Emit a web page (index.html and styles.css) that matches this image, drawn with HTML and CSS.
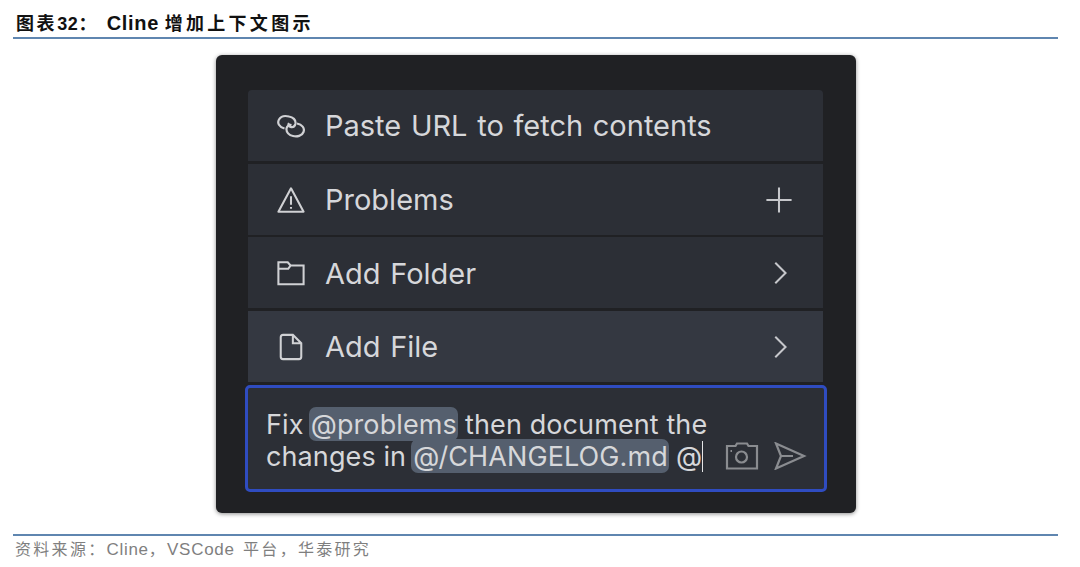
FILE: index.html
```html
<!DOCTYPE html>
<html lang="zh-CN">
<head>
<meta charset="UTF-8">
<title>图表32</title>
<link rel="stylesheet" href="styles.css">
</head>
<body>

<div class="fig-head">
    <h1 class="fig-title"><span class="cjk-narrow">图表</span>32： <span class="latin">Cline</span> <span class="cjk">增加上下文图示</span></h1>
</div>

<div class="fig-body">
    <div class="panel">
        <ul class="menu">
            <li class="menu-item">
                <svg class="icon" viewBox="0 0 28 28"><path d="M7.500 16.500C2 15 0 11 2 7.500C4 4 8 3.500 12 4.500C16 5 19 8 18.500 11.500C18 14 16 15.500 13.500 15C11.500 14.500 11 12.500 12 11"/><path d="M20 11.500C25 12.500 28 16 26.500 20C25 24 20 25 16 24C12 23.500 9 20 9.500 16.500C10 14 12 12.500 14.500 13"/></svg>
                <span class="menu-label">Paste URL to fetch contents</span>
            </li>
            <li class="menu-item">
                <svg class="icon" viewBox="0 0 30 30"><path d="M15 2.500 28.500 27.500H1.500Z" stroke-linejoin="round"/><path d="M15 11v9M15 22.500v2"/></svg>
                <span class="menu-label">Problems</span>
                <svg class="action" viewBox="0 0 30 30"><path d="M15 1.500v27M1.500 15h27"/></svg>
            </li>
            <li class="menu-item">
                <svg class="icon" viewBox="0 0 30 30"><path d="M1.500 27V3.500h10l3 3.500h14v20ZM1.500 10.500h10.500l2.500-3.500"/></svg>
                <span class="menu-label">Add Folder</span>
                <svg class="action" viewBox="0 0 30 30"><path d="M11 4l11 11-11 11"/></svg>
            </li>
            <li class="menu-item menu-item-active">
                <svg class="icon" viewBox="0 0 30 30"><path d="M17 2H6.500Q4 2 4 4.500v21Q4 28 6.500 28h17Q26 28 26 25.500V11ZM17 2v9h9"/></svg>
                <span class="menu-label">Add File</span>
                <svg class="action" viewBox="0 0 30 30"><path d="M11 4l11 11-11 11"/></svg>
            </li>
        </ul>
        <div class="composer">
            <p class="composer-text">Fix <span class="chip">@problems</span> then document the<br>changes in <span class="chip">@/CHANGELOG.md</span> @<span class="caret"></span></p>
            <div class="composer-tools">
                <svg class="tool" viewBox="0 0 34 28"><path d="M2 4h8.500l1.500-2.500h10L23.500 4H32v22.500H2Z"/><circle cx="16.500" cy="15" r="5.500"/><path d="M5.500 9H7"/></svg>
                <svg class="tool" viewBox="0 0 34 28"><path d="M3 1.500 31 14 3 26.500 8 14ZM8 14H20"/></svg>
            </div>
        </div>
    </div>
</div>

<div class="fig-foot">
    <p class="fig-source"><span class="src-cjk">资料来源：</span><span class="src-latin">Cline</span><span class="src-cjk">，</span><span class="src-latin">VSCode</span> <span class="src-cjk src-gap">平台，华泰研究</span></p>
</div>

</body>
</html>
```

FILE: styles.css
```css
body {
    margin: 0;
    padding: 0 22px 0 13px;
    background-color: #fff;
    font-family: "Liberation Sans", "Noto Sans CJK SC", sans-serif;
}

.fig-head {
    height: 37px;
    border-bottom: 2px solid #5f86b0;
}

.fig-title {
    margin: 0;
    padding: 12px 0 0 3px;
    font-size: 18px;
    line-height: 23px;
    font-weight: 700;
    letter-spacing: 0.6px;
    color: #111;
}

.cjk-narrow {
    letter-spacing: 2.6px;
}

.cjk {
    letter-spacing: 3.3px;
}

.latin {
    font-size: 20px;
    letter-spacing: 0.7px;
    margin-left: 4px;
}

.fig-body {
    display: flex;
    justify-content: center;
    padding: 16px 0 21px 1px;
}

.panel {
    width: 640px;
    height: 458px;
    box-sizing: border-box;
    padding: 35px 33px 0 32px;
    background-color: #202124;
    border-radius: 6px;
    box-shadow: 0 1px 4px rgba(0, 0, 0, 0.45);
}

.menu {
    list-style-type: none;
    margin: 0;
    padding: 0;
    display: flex;
    flex-direction: column;
    gap: 2.5px;
}

.menu-item {
    height: 71px;
    box-sizing: border-box;
    display: flex;
    align-items: center;
    padding: 1px 30px 0 29px;
    background-color: #2c2f36;
    color: #d6d7da;
}

.menu-item:first-child {
    padding-top: 0;
    border-radius: 4px 4px 0 0;
}

.menu-item-active {
    background-color: #343841;
}

.icon {
    width: 28px;
    height: 28px;
    margin-right: 20px;
    flex-shrink: 0;
    fill: none;
    stroke: #d0d1d4;
    stroke-width: 2.200;
}

.menu-label {
    font-family: Inter, sans-serif;
    font-size: 29px;
    word-spacing: 1.5px;
}

.action {
    margin-left: auto;
    width: 28px;
    height: 28px;
    fill: none;
    stroke: #c6c7cb;
    stroke-width: 2.200;
}

.composer {
    margin: 3px -4px 0 -3px;
    height: 107px;
    box-sizing: border-box;
    display: flex;
    border: 3px solid #2f4cc0;
    border-radius: 5px;
    background-color: #2c2f36;
    padding: 21px 17px 0 18px;
}

.composer-text {
    margin: 0;
    flex: 1;
    font-family: Inter, sans-serif;
    font-size: 27px;
    line-height: 32px;
    letter-spacing: 0.1px;
    color: #d6d7da;
    white-space: nowrap;
}

.chip {
    background-color: #555f6e;
    border-radius: 7px;
    padding: 1px 1px 0 2px;
    margin: 0 -0.5px 0 -2.5px;
}

.caret {
    display: inline-block;
    width: 1px;
    height: 31px;
    background-color: #e4e4e6;
    vertical-align: -6px;
}

.composer-tools {
    display: flex;
    gap: 14px;
    align-items: flex-start;
    padding-top: 33px;
}

.tool {
    width: 34px;
    height: 28px;
    fill: none;
    stroke: #8a8c90;
    stroke-width: 2.200;
}

.fig-foot {
    border-top: 2px solid #5f86b0;
}

.fig-source {
    margin: 0;
    padding: 3px 0 0 2px;
    font-size: 16px;
    line-height: 22px;
    color: #7f7f7f;
}

.src-cjk {
    letter-spacing: 2.300px;
}

.src-gap {
    margin-left: 4px;
}

.src-latin {
    font-size: 17px;
    letter-spacing: 0.7px;
}
```
